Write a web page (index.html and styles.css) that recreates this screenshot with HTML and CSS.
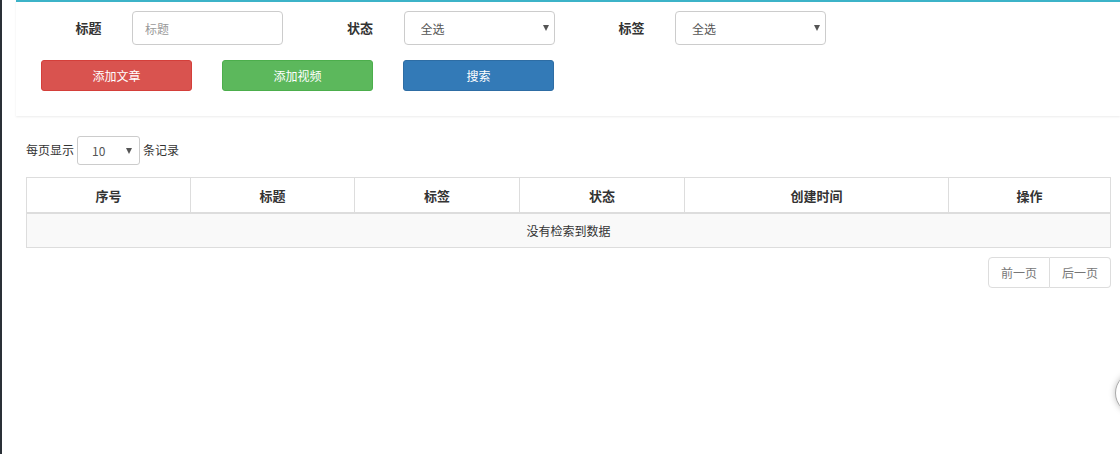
FILE: index.html
```html
<!DOCTYPE html>
<html lang="zh-CN">
<head>
<meta charset="utf-8">
<title>文章列表</title>
<link rel="stylesheet" href="styles.css">
</head>
<body>
<div class="page">
  <div class="panel">
    <div class="filters">
      <div class="field">
        <label class="field-label">标题</label>
        <input class="control" type="text" placeholder="标题">
      </div>
      <div class="field">
        <label class="field-label">状态</label>
        <div class="select-wrap"><select class="control select"><option>全选</option></select></div>
      </div>
      <div class="field">
        <label class="field-label">标签</label>
        <div class="select-wrap"><select class="control select"><option>全选</option></select></div>
      </div>
    </div>
    <div class="actions">
      <button class="btn btn-red">添加文章</button>
      <button class="btn btn-green">添加视频</button>
      <button class="btn btn-blue">搜索</button>
    </div>
  </div>

  <div class="content">
    <div class="length">
      <span>每页显示</span>
      <div class="select-wrap small"><select class="control select size"><option>10</option></select></div>
      <span>条记录</span>
    </div>
    <table class="grid">
      <thead>
        <tr>
          <th class="c1">序号</th>
          <th class="c2">标题</th>
          <th class="c3">标签</th>
          <th class="c4">状态</th>
          <th class="c5">创建时间</th>
          <th class="c6">操作</th>
        </tr>
      </thead>
      <tbody>
        <tr><td colspan="6" class="empty">没有检索到数据</td></tr>
      </tbody>
    </table>
    <div class="pager">
      <a class="page-btn">前一页</a><a class="page-btn">后一页</a>
    </div>
  </div>
</div>
<div class="fab"></div>
</body>
</html>
```

FILE: styles.css
```css
html, body {
  margin: 0;
  padding: 0;
  background: #fff;
}
body {
  font-family: "Noto Sans CJK SC", "Liberation Sans", sans-serif;
  font-size: 12px;
  color: #333;
  overflow: hidden;
}
.page {
  border-left: 2px solid #2a3037;
  min-height: 454px;
  box-sizing: border-box;
}
.panel {
  margin-left: 14px;
  border-top: 2px solid #3cb3c8;
  background: #fff;
  box-shadow: 0 1px 2px rgba(0,0,0,0.08);
  padding: 9px 0 25px 25px;
}
.filters {
  display: flex;
}
.field {
  width: 271.5px;
  display: flex;
  align-items: center;
}
.field-label {
  width: 91px;
  text-align: center;
  font-weight: bold;
  font-size: 13px;
  padding-left: 4px;
  box-sizing: border-box;
  margin-top: -2px;
}
.control {
  width: 151px;
  height: 34px;
  box-sizing: border-box;
  border: 1px solid #ccc;
  border-radius: 4px;
  font-family: inherit;
  font-size: 12px;
  color: #555;
  padding: 0 12px;
  background: #fff;
  outline: none;
}
.control::placeholder { color: #999; }
.select-wrap {
  position: relative;
}
.select {
  -webkit-appearance: none;
  appearance: none;
  padding-left: 16px;
}
.select-wrap::after {
  content: "";
  position: absolute;
  right: 6px;
  top: 14px;
  border-left: 3px solid transparent;
  border-right: 3px solid transparent;
  border-top: 6px solid #555;
  pointer-events: none;
}
.actions {
  display: flex;
  gap: 30px;
  margin-top: 15px;
}
.btn {
  width: 151px;
  height: 31px;
  border-radius: 3px;
  border: 1px solid transparent;
  color: #fff;
  font-family: inherit;
  font-size: 12px;
  padding: 0;
}
.btn-red { background: #d9534f; border-color: #d43f3a; }
.btn-green { background: #5cb85c; border-color: #4cae4c; }
.btn-blue { background: #337ab7; border-color: #2e6da4; }

.content {
  padding: 20px 9px 0 24px;
}
.length {
  display: flex;
  align-items: center;
  gap: 3px;
}
.length span { margin-top: -2px; }
.control.size {
  width: 63px;
  height: 29px;
  padding-left: 14px;
  border-radius: 3px;
}
.small::after { top: 12px; right: 8px; }
.grid {
  margin-top: 12px;
  width: 100%;
  border-collapse: collapse;
  table-layout: fixed;
  border: 1px solid #ddd;
}
.grid th {
  height: 34px;
  border: 1px solid #ddd;
  border-bottom: 2px solid #ddd;
  font-weight: bold;
  font-size: 13px;
  text-align: center;
  padding: 0;
}
.c1 { width: 163px; }
.c2 { width: 163px; }
.c3 { width: 164px; }
.c4 { width: 164px; }
.c5 { width: 263px; }
.grid td.empty {
  height: 33px;
  background: #f9f9f9;
  text-align: center;
  padding: 0;
}
.pager {
  display: flex;
  justify-content: flex-end;
  margin-top: 9px;
}
.page-btn {
  display: flex;
  align-items: center;
  justify-content: center;
  width: 60px;
  height: 29px;
  border: 1px solid #ddd;
  color: #777;
  background: #fff;
}
.page-btn:first-child {
  border-radius: 4px 0 0 4px;
}
.page-btn + .page-btn {
  border-left: 0;
  border-radius: 0 4px 4px 0;
}
.fab {
  position: fixed;
  left: 1115px;
  top: 372px;
  width: 40px;
  height: 40px;
  border-radius: 50%;
  border: 1px solid #aaa;
  background: #fff;
  box-shadow: 0 0 6px rgba(0,0,0,0.25);
}
```
